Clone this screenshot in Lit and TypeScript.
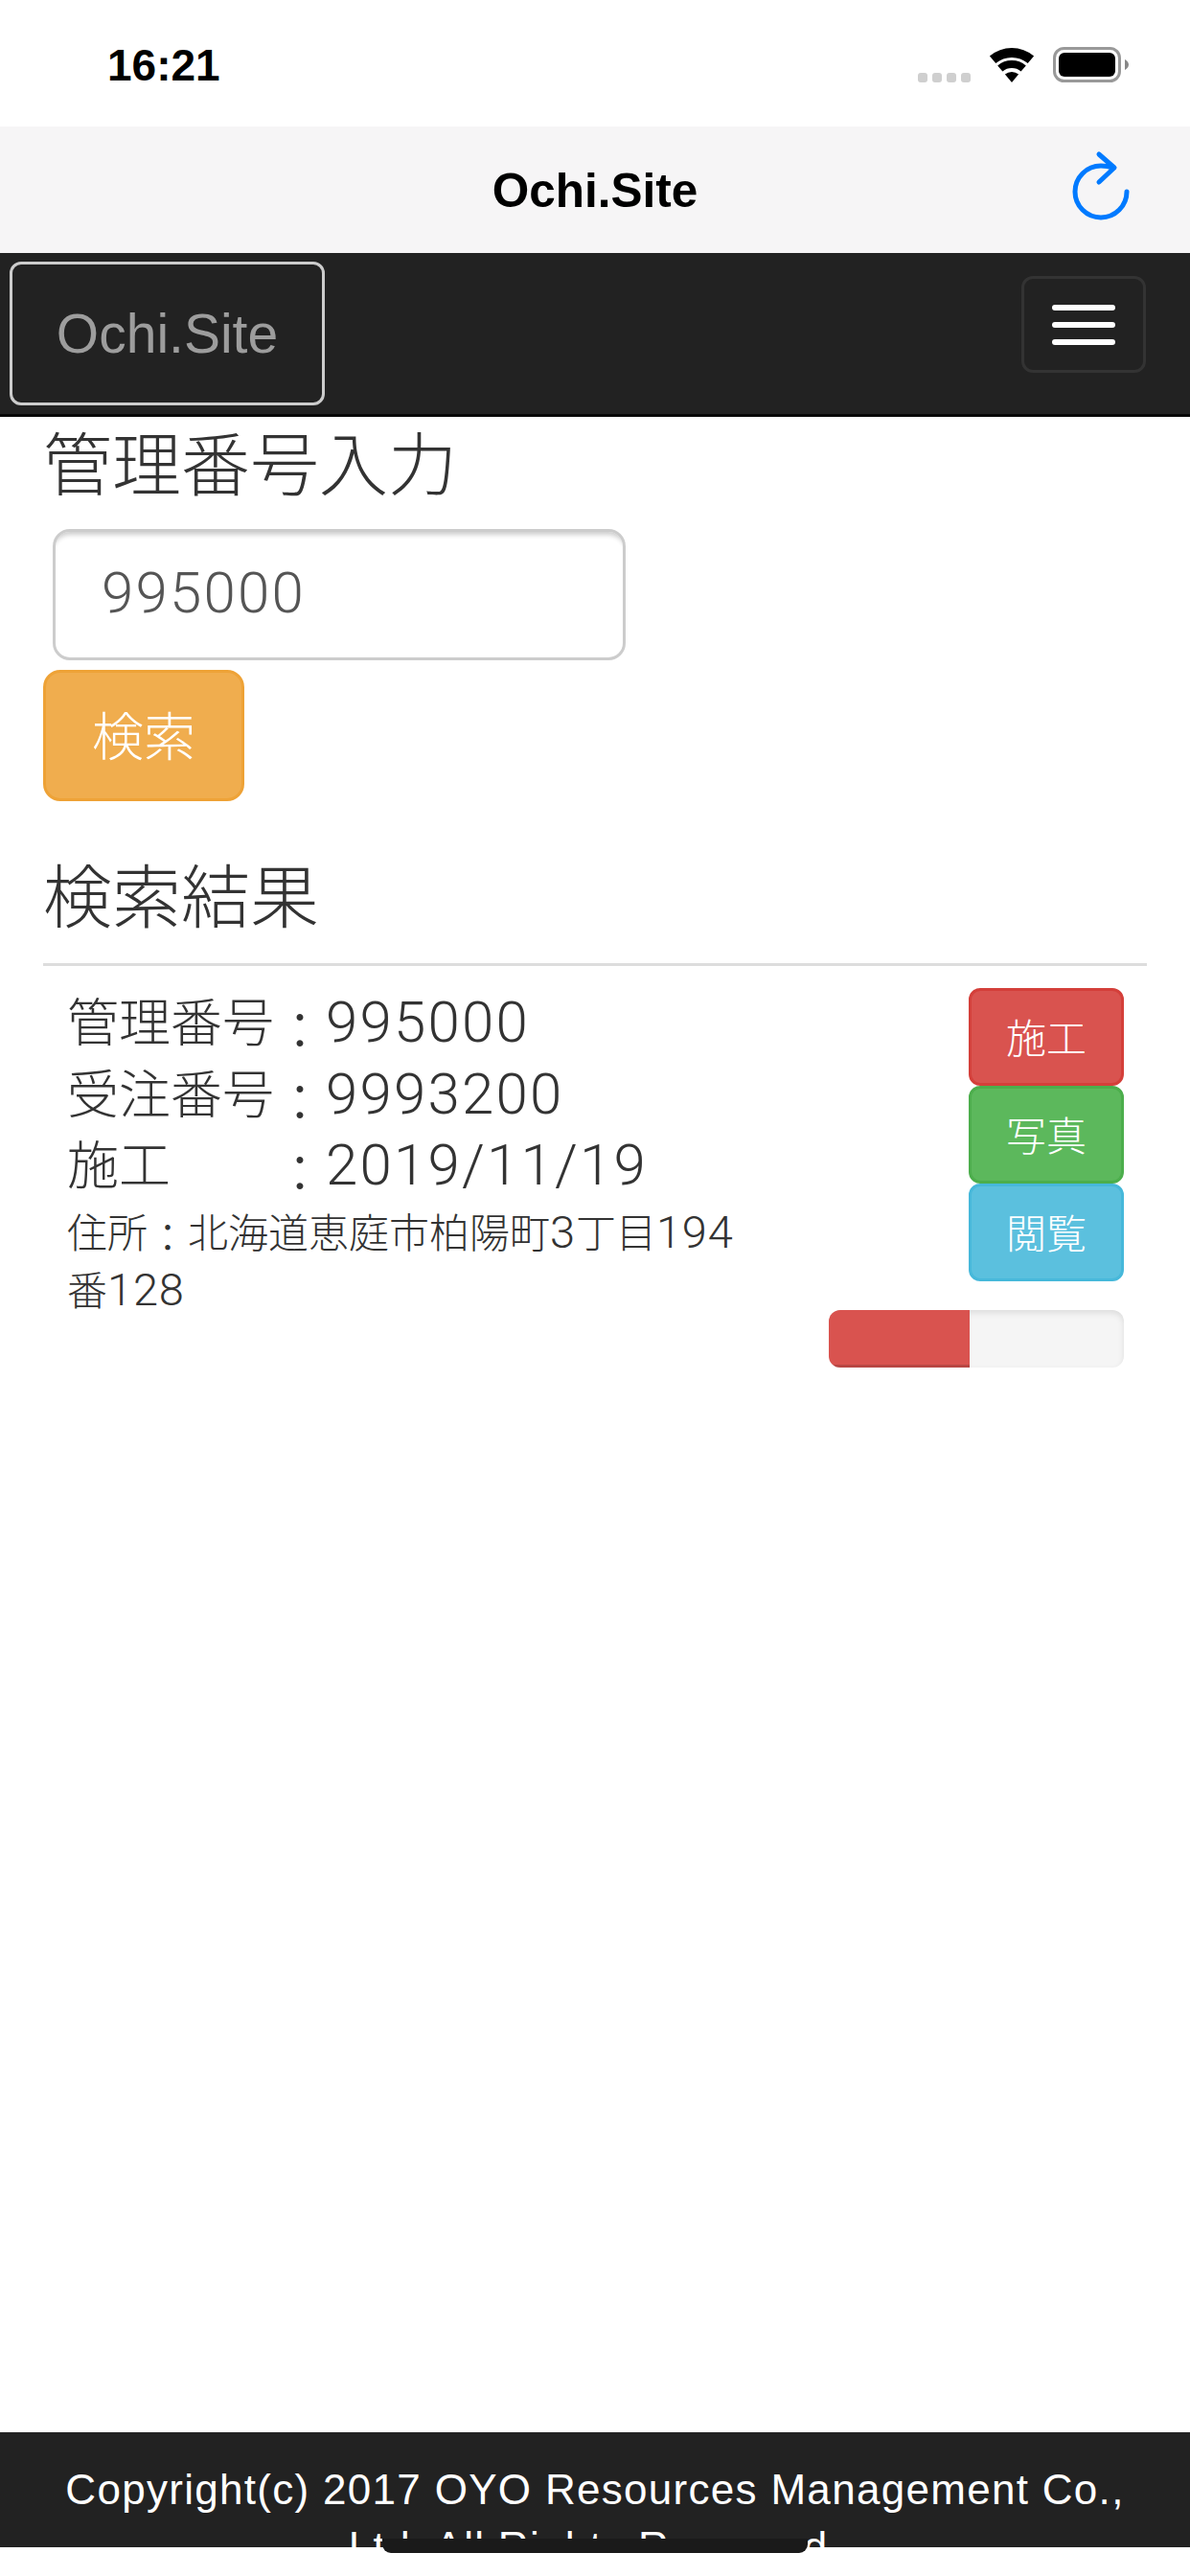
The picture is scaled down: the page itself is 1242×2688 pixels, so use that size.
import { LitElement, html, css } from 'lit';
import { customElement, state } from 'lit/decorators.js';

interface ActionButton {
  label: string;
  kind: string;
}

@customElement('app-root')
export class AppRoot extends LitElement {
  @state() private buttons: ActionButton[] = [
    { label: '施工', kind: 'danger' },
    { label: '写真', kind: 'success' },
    { label: '閲覧', kind: 'info' },
  ];
  @state() private progress = 47.7;

  static styles = css`
    :host {
      display: flex;
      flex-direction: column;
      position: relative;
      height: 2688px;
      background: #fff;
      color: #333;
      font-family: "Liberation Sans", "Noto Sans CJK JP", sans-serif;
      overflow: hidden;
    }

    /* ios chrome */
    .status {
      height: 132px;
      box-sizing: border-box;
      flex: none;
      display: flex;
      justify-content: space-between;
      align-items: center;
      padding: 3px 64px 0 112px;
      color: #000;
    }
    .time {
      font-size: 46px;
      font-weight: 700;
      line-height: 1;
    }
    .indicators {
      display: flex;
      align-items: flex-end;
      gap: 19px;
    }
    .signal {
      display: flex;
      gap: 5px;
    }
    .signal i {
      display: block;
      width: 10px;
      height: 10px;
      border-radius: 3px;
      background: #cfcfcf;
    }
    .wifi {
      display: block;
      width: 48px;
      height: 36px;
    }
    .battery {
      display: block;
      width: 79px;
      height: 37px;
    }
    .titlebar {
      height: 132px;
      flex: none;
      box-sizing: border-box;
      background: #f6f5f6;
      display: grid;
      grid-template-columns: 1fr auto 1fr;
      align-items: center;
      padding: 0 57px;
    }
    .titlebar .title {
      grid-column: 2;
      font-size: 49.5px;
      font-weight: 700;
      color: #000;
    }
    .reload {
      grid-column: 3;
      justify-self: end;
      display: block;
      width: 70px;
      height: 76px;
      margin-bottom: 10px;
    }

    /* bootstrap navbar at 3x */
    .navbar {
      height: 171px;
      flex: none;
      box-sizing: border-box;
      background: #222;
      border-bottom: 3px solid #080808;
      display: flex;
      justify-content: space-between;
      align-items: flex-start;
      padding: 9px 46px 0 10px;
    }
    .brand {
      width: 329px;
      height: 150px;
      box-sizing: border-box;
      border: 3px solid #ccc;
      border-radius: 12px;
      display: flex;
      align-items: center;
      justify-content: center;
      color: #9d9d9d;
      font-size: 57px;
    }
    .toggle {
      width: 130px;
      height: 101px;
      margin-top: 15px;
      box-sizing: border-box;
      border: 3px solid #333;
      border-radius: 12px;
      display: flex;
      flex-direction: column;
      align-items: center;
      justify-content: center;
      gap: 12px;
      background: transparent;
      padding: 0;
    }
    .toggle span {
      display: block;
      width: 66px;
      height: 6px;
      border-radius: 3px;
      background: #fff;
    }

    main {
      flex: 1;
      padding: 3px 45px 0;
      min-height: 0;
      font-weight: 300;
    }
    h3 {
      margin: 0;
      font-size: 72px;
      font-weight: 300;
      line-height: 96px;
    }
    .search-input {
      display: block;
      width: 598px;
      height: 137px;
      box-sizing: border-box;
      margin: 18px 0 10px 10px;
      padding: 0 48px 4px;
      border: 3px solid #ccc;
      border-radius: 18px;
      box-shadow: inset 0 7px 5px -4px rgba(0, 0, 0, 0.2);
      font: inherit;
      font-family: Roboto, sans-serif;
      font-size: 60px;
      letter-spacing: 2.2px;
      color: #555;
      background: #fff;
      outline: none;
    }
    .btn {
      display: flex;
      align-items: center;
      justify-content: center;
      box-sizing: border-box;
      border: 3px solid;
      border-radius: 12px;
      color: #fff;
      font-family: inherit;
      font-weight: 300;
      padding: 0;
    }
    .search-btn {
      width: 210px;
      height: 137px;
      font-size: 54px;
      padding-bottom: 4px;
      border-radius: 18px;
      background: #f0ad4e;
      border-color: #eea236;
    }
    .page-header {
      margin-top: 53px;
      height: 119px;
      box-sizing: border-box;
      border-bottom: 3px solid #ddd;
    }
    .result {
      display: flex;
      justify-content: space-between;
      padding: 23px 24px 0 25px;
    }
    .info {
      width: 715px;
    }
    .line {
      font-size: 54px;
      line-height: 74.5px;
    }
    .line .key {
      display: inline-block;
      width: 216px;
    }
    .num {
      font-family: Roboto, sans-serif;
      font-size: 60px;
      letter-spacing: 2.2px;
      line-height: 1;
    }
    .colon {
      display: inline-block;
      transform: translateY(9px);
    }
    .address {
      font-size: 42px;
      line-height: 60px;
      margin-top: 3px;
    }
    .address .num {
      font-size: 47px;
      letter-spacing: 0.8px;
    }
    .address .colon {
      transform: translateY(5px);
    }
    .actions {
      display: flex;
      flex-direction: column;
      align-items: flex-end;
    }
    .action {
      width: 162px;
      height: 102px;
      font-size: 42px;
      padding-bottom: 3px;
    }
    .danger {
      background: #d9534f;
      border-color: #d43f3a;
    }
    .success {
      background: #5cb85c;
      border-color: #4cae4c;
    }
    .info-btn {
      background: #5bc0de;
      border-color: #46b8da;
    }
    .progress {
      width: 308px;
      height: 60px;
      margin-top: 30px;
      border-radius: 12px;
      background: #f5f5f5;
      box-shadow: inset 0 3px 6px rgba(0, 0, 0, 0.1);
      overflow: hidden;
    }
    .progress div {
      height: 100%;
      background: #d9534f;
      box-shadow: inset 0 -3px 0 rgba(0, 0, 0, 0.15);
    }

    footer {
      height: 120px;
      flex: none;
      margin-bottom: 30px;
      background: #222;
      color: #fff;
      font-size: 44px;
      letter-spacing: 1.3px;
      line-height: 60px;
      text-align: center;
      box-sizing: border-box;
      padding: 30px 60px 0;
    }
    .home {
      position: absolute;
      left: 399px;
      bottom: 24px;
      width: 444px;
      height: 15px;
      border-radius: 0 0 9px 9px;
      background: #1a1a1a;
    }
  `;

  private renderStatus() {
    return html`
      <div class="status">
        <div class="time">16:21</div>
        <div class="indicators">
          <div class="signal"><i></i><i></i><i></i><i></i></div>
          <svg class="wifi" viewBox="0 0 48 36">
            <path d="M.9 8.4A36 36 0 0 1 47.1 8.4L40.7 16.1A26 26 0 0 0 7.3 16.1Z" />
            <path d="M9.2 18.4A23 23 0 0 1 38.8 18.4L33.6 24.5A15 15 0 0 0 14.4 24.5Z" />
            <path d="M16.9 27.6A11 11 0 0 1 31.1 27.6L24 36Z" />
          </svg>
          <svg class="battery" viewBox="0 0 79 37">
            <rect x="1.5" y="1.5" width="68" height="34" rx="10" fill="none" stroke="#999" stroke-width="3" />
            <rect x="6" y="6" width="59" height="25" rx="6" />
            <path d="M75 13c2 1 4 3 4 5.500s-2 4.500-4 5.500Z" fill="#888" />
          </svg>
        </div>
      </div>
    `;
  }

  render() {
    const colon = html`<span class="colon">：</span>`;
    return html`
      ${this.renderStatus()}
      <div class="titlebar">
        <div class="title">Ochi.Site</div>
        <svg class="reload" viewBox="0 0 70 76" fill="none" stroke="#007aff" stroke-width="5" stroke-linecap="round" stroke-linejoin="round">
          <path d="M61 45A27 27 0 1 1 34 18Q41 18 46 20" />
          <path d="M32 6L48 20L32 35" />
        </svg>
      </div>
      <div class="navbar">
        <div class="brand">Ochi.Site</div>
        <button class="toggle"><span></span><span></span><span></span></button>
      </div>
      <main>
        <h3>管理番号入力</h3>
        <input class="search-input" .value=${'995000'} readonly />
        <button class="btn search-btn">検索</button>
        <div class="page-header"><h3>検索結果</h3></div>
        <div class="result">
          <div class="info">
            <div class="line"><span class="key">管理番号</span>${colon}<span class="num">995000</span></div>
            <div class="line"><span class="key">受注番号</span>${colon}<span class="num">9993200</span></div>
            <div class="line"><span class="key">施工</span>${colon}<span class="num">2019/11/19</span></div>
            <div class="address">住所${colon}北海道恵庭市柏陽町<span class="num">3</span>丁目<span class="num">194</span>番<span class="num">128</span></div>
          </div>
          <div class="actions">
            ${this.buttons.map(
              (b) => html`<button class="btn action ${b.kind === 'info' ? 'info-btn' : b.kind}">${b.label}</button>`
            )}
            <div class="progress"><div style="width: ${this.progress}%"></div></div>
          </div>
        </div>
      </main>
      <footer>Copyright(c) 2017 OYO Resources Management Co., Ltd. All Rights Reserved.</footer>
      <div class="home"></div>
    `;
  }
}
